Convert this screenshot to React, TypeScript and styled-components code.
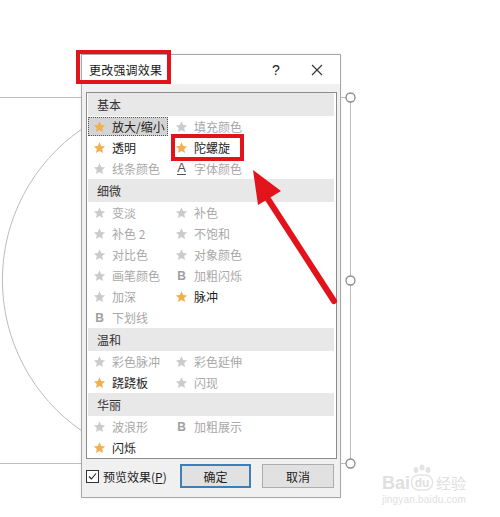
import React from "react";
import styled, { createGlobalStyle } from "styled-components";

const GlobalStyle = createGlobalStyle`
  html, body {
    margin: 0;
    padding: 0;
    background: #ffffff;
  }
  body {
    font-family: "Noto Sans CJK SC", "Noto Sans", sans-serif;
  }
`;

const FONT = `"Noto Sans CJK SC", "Microsoft YaHei", "Noto Sans", sans-serif`;

const Stage = styled.div`
  position: relative;
  width: 500px;
  height: 517px;
  overflow: hidden;
  background: #ffffff;
  font-family: ${FONT};
`;

// 슬라이드 위의 도형 (원 + 선택 테두리)
const SlideShape = styled.svg`
  position: absolute;
  left: 0;
  top: 0;
`;

const Dialog = styled.div`
  position: absolute;
  left: 81px;
  top: 54px;
  width: 258px;
  height: 442px;
  border: 1px solid #a8a8a8;
  background: #f0f0f0;
  display: flex;
  flex-direction: column;
  box-shadow: 0 0 3px rgba(0, 0, 0, 0.08);
`;

const TitleBar = styled.div`
  height: 29px;
  background: #ffffff;
  display: flex;
  align-items: center;
  padding-left: 7px;
  font-size: 12px;
  color: #1a1a1a;
`;

const TitleText = styled.span`
  flex: 1;
  letter-spacing: 0.2px;
`;

const TitleButton = styled.span<{ $w: number }>`
  width: ${({ $w }) => $w}px;
  display: flex;
  justify-content: center;
  align-items: center;
  font-family: "Liberation Sans", Arial, sans-serif;
  font-size: 14px;
  color: #222;
`;

const Body = styled.div`
  flex: 1;
  display: flex;
  flex-direction: column;
  padding: 8px 3px 9px 4px;
`;

const List = styled.div`
  height: 365px;
  border: 1px solid #8c8c8c;
  background: #ffffff;
  padding: 0 2px 0 1px;
  display: flex;
  flex-direction: column;
`;

const GroupHeader = styled.div`
  height: 23px;
  background: #e8e8e8;
  display: flex;
  align-items: center;
  padding-left: 9px;
  font-size: 12px;
  color: #333;
`;

const Grid = styled.div`
  display: grid;
  grid-template-columns: 82px 1fr;
  grid-auto-rows: 21px;
`;

const Item = styled.div<{ $disabled?: boolean; $selected?: boolean }>`
  display: flex;
  align-items: center;
  gap: 6px;
  padding-left: 5px;
  margin: 1px 2px 1px 0;
  font-size: 12px;
  color: ${({ $disabled }) => ($disabled ? "#a8a8a8" : "#222")};
  background: ${({ $selected }) => ($selected ? "#d4d4d4" : "transparent")};
  outline: ${({ $selected }) => ($selected ? "1px dotted #555" : "none")};
  outline-offset: -1px;
  white-space: nowrap;
`;

const IconBox = styled.span`
  width: 13px;
  height: 13px;
  display: flex;
  align-items: center;
  justify-content: center;
  flex-shrink: 0;
`;

const BoldB = styled.span`
  font-family: "Liberation Sans", Arial, sans-serif;
  font-weight: bold;
  font-size: 12px;
  color: #a0a0a0;
`;

const UnderA = styled.span`
  font-family: "Liberation Sans", Arial, sans-serif;
  font-size: 13px;
  color: #555;
  line-height: 12px;
  border-bottom: 1.5px solid #555;
`;

const Footer = styled.div`
  margin-top: 5px;
  height: 24px;
  display: flex;
  align-items: center;
`;

const CheckLabel = styled.label`
  display: flex;
  align-items: center;
  gap: 4px;
  font-size: 12px;
  color: #222;
  u {
    text-decoration: underline;
  }
`;

const CheckBox = styled.span`
  width: 11px;
  height: 11px;
  border: 1px solid #333;
  background: #fff;
  display: flex;
  align-items: center;
  justify-content: center;
`;

const Buttons = styled.div`
  margin-left: auto;
  display: flex;
  gap: 11px;
  padding-right: 3px;
`;

const Button = styled.button<{ $primary?: boolean }>`
  width: ${({ $primary }) => ($primary ? 71 : 72)}px;
  height: 24px;
  box-sizing: border-box;
  border: ${({ $primary }) =>
    $primary ? "2px solid #3f7fb6" : "1px solid #adadad"};
  background: #e1e1e1;
  font-family: ${FONT};
  font-size: 12px;
  color: #222;
  padding: 0;
`;

// 빨간 강조 표시
const RedBox = styled.div<{ $x: number; $y: number; $w: number; $h: number }>`
  position: absolute;
  left: ${({ $x }) => $x}px;
  top: ${({ $y }) => $y}px;
  width: ${({ $w }) => $w}px;
  height: ${({ $h }) => $h}px;
  box-sizing: border-box;
  border: 4px solid #e3131b;
`;

const Overlay = styled.svg`
  position: absolute;
  left: 0;
  top: 0;
  pointer-events: none;
`;

const Watermark = styled.div`
  position: absolute;
  left: 382px;
  top: 464px;
  display: flex;
  flex-direction: column;
  align-items: flex-start;
  color: #e0e0e0;
  font-family: "Liberation Sans", Arial, sans-serif;
`;

const WmTop = styled.div`
  display: flex;
  align-items: flex-end;
  font-size: 18px;
  font-weight: bold;
  height: 28px;
  line-height: 18px;
  span.cn {
    font-family: ${FONT};
    font-size: 15px;
    font-weight: normal;
    margin-left: 2px;
  }
`;

const WmSub = styled.div`
  font-size: 10px;
  margin-top: 2px;
  letter-spacing: 0.2px;
`;

const Star = ({ gold }: { gold?: boolean }) => (
  <svg width="14" height="14" viewBox="0 0 24 24">
    <path
      d="M12 1.5l3.1 7 7.4.6-5.6 4.9 1.7 7.4L12 17.5l-6.6 3.9 1.7-7.4-5.6-4.9 7.4-.6z"
      fill={gold ? "#f1b04f" : "#cbcbcb"}
    />
  </svg>
);

type Entry = {
  label: string;
  icon: "gold" | "gray" | "B" | "A";
  disabled?: boolean;
  selected?: boolean;
};

const groups: { title: string; items: (Entry | null)[] }[] = [
  {
    title: "基本",
    items: [
      { label: "放大/缩小", icon: "gold", selected: true },
      { label: "填充颜色", icon: "gray", disabled: true },
      { label: "透明", icon: "gold" },
      { label: "陀螺旋", icon: "gold" },
      { label: "线条颜色", icon: "gray", disabled: true },
      { label: "字体颜色", icon: "A", disabled: true },
    ],
  },
  {
    title: "细微",
    items: [
      { label: "变淡", icon: "gray", disabled: true },
      { label: "补色", icon: "gray", disabled: true },
      { label: "补色 2", icon: "gray", disabled: true },
      { label: "不饱和", icon: "gray", disabled: true },
      { label: "对比色", icon: "gray", disabled: true },
      { label: "对象颜色", icon: "gray", disabled: true },
      { label: "画笔颜色", icon: "gray", disabled: true },
      { label: "加粗闪烁", icon: "B", disabled: true },
      { label: "加深", icon: "gray", disabled: true },
      { label: "脉冲", icon: "gold" },
      { label: "下划线", icon: "B", disabled: true },
      null,
    ],
  },
  {
    title: "温和",
    items: [
      { label: "彩色脉冲", icon: "gray", disabled: true },
      { label: "彩色延伸", icon: "gray", disabled: true },
      { label: "跷跷板", icon: "gold" },
      { label: "闪现", icon: "gray", disabled: true },
    ],
  },
  {
    title: "华丽",
    items: [
      { label: "波浪形", icon: "gray", disabled: true },
      { label: "加粗展示", icon: "B", disabled: true },
      { label: "闪烁", icon: "gold" },
      null,
    ],
  },
];

const renderIcon = (icon: Entry["icon"]) => {
  if (icon === "B") return <BoldB>B</BoldB>;
  if (icon === "A") return <UnderA>A</UnderA>;
  return <Star gold={icon === "gold"} />;
};

export default function App() {
  return (
    <Stage>
      <GlobalStyle />
      <SlideShape width="500" height="517">
        <g stroke="#bdbdbd" strokeWidth="1" fill="none">
          <line x1="0" y1="97.5" x2="346" y2="97.5" />
          <line x1="0" y1="463.5" x2="346" y2="463.5" />
          <line x1="350.5" y1="101" x2="350.5" y2="276" />
          <line x1="350.5" y1="285" x2="350.5" y2="459" />
          <path d="M 82 129 A 183 183 0 0 0 82 431" stroke="#bcbcbc" />
        </g>
        <g fill="#ffffff" stroke="#8a8a8a" strokeWidth="1.3">
          <circle cx="350.5" cy="97.5" r="4.5" />
          <circle cx="350.5" cy="280.5" r="4.5" />
          <circle cx="350.5" cy="463.5" r="4.5" />
        </g>
      </SlideShape>

      <Dialog>
        <TitleBar>
          <TitleText>更改强调效果</TitleText>
          <TitleButton $w={36}>?</TitleButton>
          <TitleButton $w={46}>
            <svg width="12" height="12" viewBox="0 0 12 12">
              <path d="M1 1L11 11M11 1L1 11" stroke="#333" strokeWidth="1.1" />
            </svg>
          </TitleButton>
        </TitleBar>
        <Body>
          <List>
            {groups.map((g) => (
              <React.Fragment key={g.title}>
                <GroupHeader>{g.title}</GroupHeader>
                <Grid>
                  {g.items.map((it, i) =>
                    it ? (
                      <Item
                        key={it.label}
                        $disabled={it.disabled}
                        $selected={it.selected}
                      >
                        <IconBox>{renderIcon(it.icon)}</IconBox>
                        {it.label}
                      </Item>
                    ) : (
                      <span key={`empty-${i}`} />
                    )
                  )}
                </Grid>
              </React.Fragment>
            ))}
          </List>
          <Footer>
            <CheckLabel>
              <CheckBox>
                <svg width="9" height="9" viewBox="0 0 9 9">
                  <path
                    d="M1 4.5L3.4 7L8 1.5"
                    stroke="#222"
                    strokeWidth="1.1"
                    fill="none"
                  />
                </svg>
              </CheckBox>
              <span>
                预览效果(<u>P</u>)
              </span>
            </CheckLabel>
            <Buttons>
              <Button $primary>确定</Button>
              <Button>取消</Button>
            </Buttons>
          </Footer>
        </Body>
      </Dialog>

      <RedBox $x={76} $y={50} $w={95} $h={34} />
      <RedBox $x={171} $y={134} $w={73} $h={27} />

      <Overlay width="500" height="517">
        <line
          x1="334"
          y1="301"
          x2="266"
          y2="196"
          stroke="#e3131b"
          strokeWidth="6"
          strokeLinecap="round"
        />
        <polygon points="253,170 258,205 281,191" fill="#e3131b" />
      </Overlay>

      <Watermark>
        <WmTop>
          Bai
          <svg width="24" height="28" viewBox="0 0 24 28">
            <g fill="#e4e4e4">
              <ellipse cx="6" cy="6" rx="2.5" ry="3" />
              <ellipse cx="12" cy="3.5" rx="2.5" ry="3" />
              <ellipse cx="18" cy="6" rx="2.5" ry="3" />
            </g>
            <rect
              x="1.5"
              y="11"
              width="21"
              height="15"
              rx="7"
              fill="none"
              stroke="#e4e4e4"
              strokeWidth="1.5"
            />
            <text
              x="12"
              y="23"
              textAnchor="middle"
              fontSize="12"
              fontWeight="bold"
              fontFamily="Liberation Sans, Arial, sans-serif"
              fill="#e0e0e0"
            >
              du
            </text>
          </svg>
          <span className="cn">经验</span>
        </WmTop>
        <WmSub>jingyan.baidu.com</WmSub>
      </Watermark>
    </Stage>
  );
}
